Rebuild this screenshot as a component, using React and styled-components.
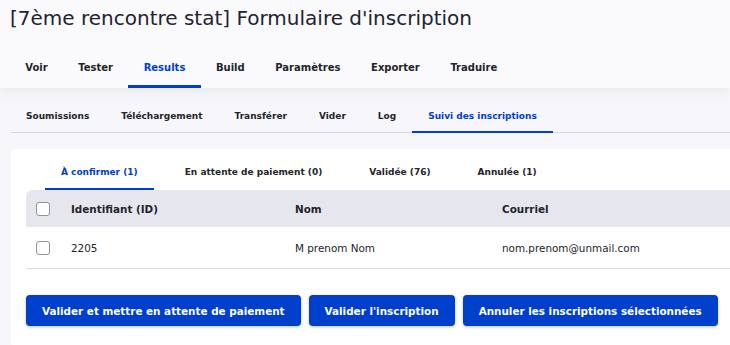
import React from "react";
import styled, { createGlobalStyle } from "styled-components";

const Global = createGlobalStyle`
  html, body { margin: 0; padding: 0; }
  body {
    background: #f7f7fb;
    font-family: "DejaVu Sans", "Liberation Sans", sans-serif;
    color: #232429;
    overflow: hidden;
  }
`;

const Header = styled.header`
  background: #fafafd;
  box-shadow: 0 4px 10px rgba(0, 0, 0, 0.06);
  padding-top: 4px;
`;

const Title = styled.h1`
  margin: 0;
  padding-left: 10px;
  font-size: 20px;
  font-weight: 400;
  line-height: 28px;
  color: #222330;
`;

const PrimaryNav = styled.nav`
  display: flex;
  padding-left: 10px;
  margin-top: 14px;
`;

const PrimaryTab = styled.a`
  display: flex;
  align-items: center;
  height: 42px;
  padding: 0 15.3px;
  font-size: 10px;
  font-weight: 700;
  white-space: nowrap;
  color: ${(p) => (p.$active ? "#003ecc" : "#232429")};
  box-shadow: ${(p) => (p.$active ? "inset 0 -3px 0 #003ecc" : "none")};
`;

const SecondaryNav = styled.nav`
  display: flex;
  margin: 12px 0 0 10px;
  border-bottom: 1px solid #d8d9e0;
`;

const SecondaryTab = styled.a`
  display: flex;
  align-items: center;
  height: 33px;
  padding: 0 16px 1px 16px;
  box-sizing: border-box;
  font-size: 9px;
  font-weight: 700;
  white-space: nowrap;
  color: ${(p) => (p.$active ? "#003ecc" : "#232429")};
  box-shadow: ${(p) => (p.$active ? "inset 0 -2px 0 #003ecc" : "none")};
  margin-bottom: -1px;
`;

const Card = styled.section`
  margin: 16px 0 0 11px;
  background: #fff;
  border-radius: 4px 0 0 4px;
  padding: 0 0 20px 15px;
`;

const InnerNav = styled.nav`
  display: flex;
  gap: 15px;
  padding-left: 19px;
`;

const InnerTab = styled.a`
  display: flex;
  align-items: center;
  height: 41px;
  box-sizing: border-box;
  padding: 5px 16px 0;
  font-size: 9px;
  font-weight: 700;
  white-space: nowrap;
  color: ${(p) => (p.$active ? "#003ecc" : "#232429")};
  box-shadow: ${(p) => (p.$active ? "inset 0 -2px 0 #003ecc" : "none")};
`;

const Row = styled.div`
  display: grid;
  grid-template-columns: 45px 224px 207px 1fr;
  align-items: center;
  height: ${(p) => (p.$head ? "37px" : "41px")};
  background: ${(p) => (p.$head ? "#e6e7ee" : "#fff")};
  border-radius: ${(p) => (p.$head ? "6px 0 0 0" : "0")};
  border-bottom: ${(p) => (p.$head ? "none" : "1px solid #dcdde3")};
  font-size: 10.4px;
  font-weight: ${(p) => (p.$head ? 700 : 400)};
  color: #232429;
`;

const Cell = styled.div`
  padding-left: ${(p) => (p.$check ? "10px" : "0")};
  display: flex;
  align-items: center;
  white-space: nowrap;
`;

const Checkbox = styled.span`
  width: 14px;
  height: 14px;
  box-sizing: border-box;
  border: 1px solid #8e929c;
  border-radius: 3px;
  background: #fff;
`;

const Actions = styled.div`
  display: flex;
  gap: 8px;
  margin-top: 26px;
`;

const Button = styled.button`
  height: 31px;
  padding: 0 16px;
  border: 0;
  border-radius: 4px;
  background: #003ecc;
  color: #fff;
  font-family: inherit;
  font-size: 10.4px;
  font-weight: 700;
  white-space: nowrap;
  box-shadow: 0 1px 3px rgba(0, 62, 204, 0.3);
`;

const primary = ["Voir", "Tester", "Results", "Build", "Paramètres", "Exporter", "Traduire"];
const secondary = ["Soumissions", "Téléchargement", "Transférer", "Vider", "Log", "Suivi des inscriptions"];
const inner = ["À confirmer (1)", "En attente de paiement (0)", "Validée (76)", "Annulée (1)"];

export default function App() {
  return (
    <>
      <Global />
      <Header>
        <Title>[7ème rencontre stat] Formulaire d'inscription</Title>
        <PrimaryNav>
          {primary.map((t) => (
            <PrimaryTab key={t} $active={t === "Results"}>{t}</PrimaryTab>
          ))}
        </PrimaryNav>
      </Header>
      <SecondaryNav>
        {secondary.map((t) => (
          <SecondaryTab key={t} $active={t === "Suivi des inscriptions"}>{t}</SecondaryTab>
        ))}
      </SecondaryNav>
      <Card>
        <InnerNav>
          {inner.map((t, i) => (
            <InnerTab key={t} $active={i === 0}>{t}</InnerTab>
          ))}
        </InnerNav>
        <Row $head>
          <Cell $check><Checkbox /></Cell>
          <Cell>Identifiant (ID)</Cell>
          <Cell>Nom</Cell>
          <Cell>Courriel</Cell>
        </Row>
        <Row>
          <Cell $check><Checkbox /></Cell>
          <Cell>2205</Cell>
          <Cell>M prenom Nom</Cell>
          <Cell>nom.prenom@unmail.com</Cell>
        </Row>
        <Actions>
          <Button>Valider et mettre en attente de paiement</Button>
          <Button>Valider l'inscription</Button>
          <Button>Annuler les inscriptions sélectionnées</Button>
        </Actions>
      </Card>
    </>
  );
}
